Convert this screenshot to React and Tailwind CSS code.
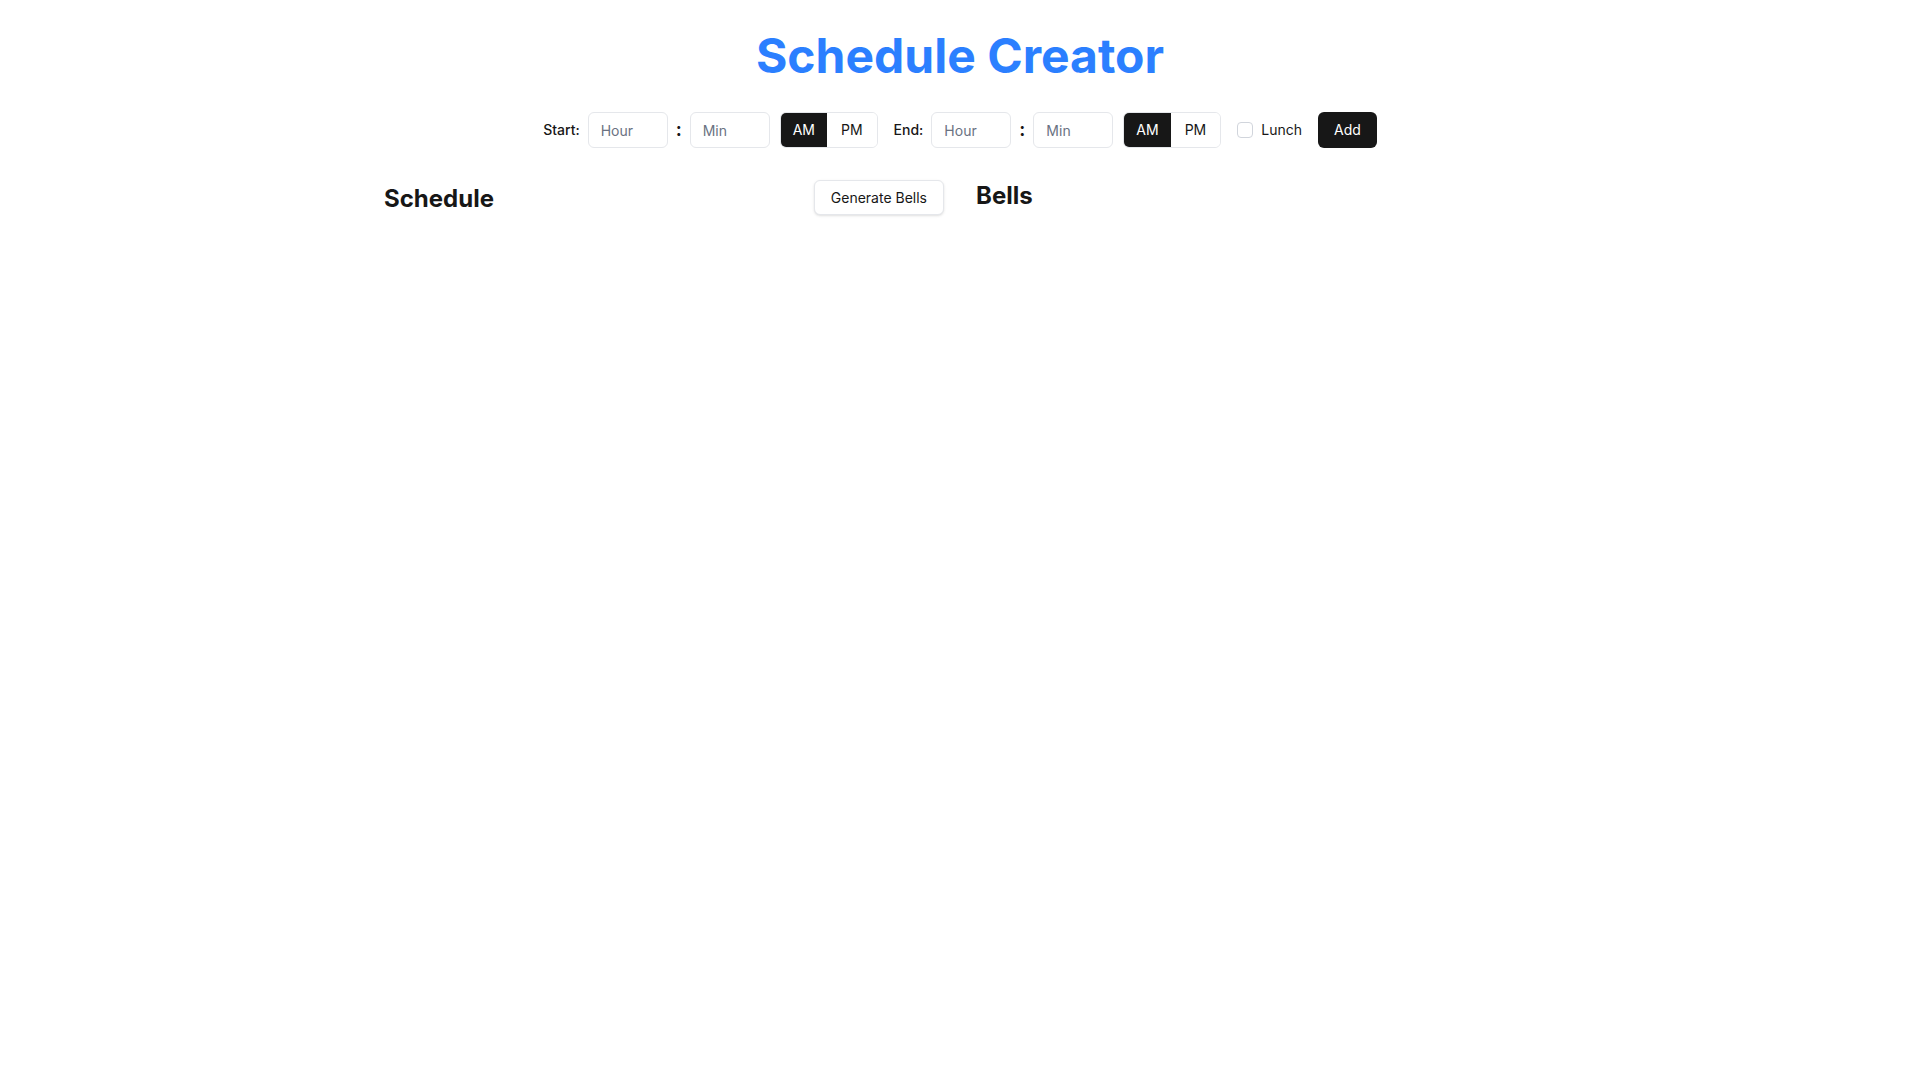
import React, { useState } from 'react';

const TimeInput = ({ label, period, onPeriod }) => (
  <div className="flex items-center gap-2">
    <span className="text-sm font-medium text-neutral-900">{label}</span>
    <input
      placeholder="Hour"
      className="h-9 w-20 rounded-md border border-gray-200 px-3 text-sm text-neutral-900 placeholder:text-gray-500 outline-none"
    />
    <span className="text-lg font-bold text-neutral-900">:</span>
    <input
      placeholder="Min"
      className="h-9 w-20 rounded-md border border-gray-200 px-3 text-sm text-neutral-900 placeholder:text-gray-500 outline-none"
    />
    <div className="ml-0.5 flex h-9 overflow-hidden rounded-md border border-gray-200">
      <button
        onClick={() => onPeriod('AM')}
        className={period === 'AM' ? 'bg-neutral-900 px-3 text-sm text-white' : 'bg-white px-3 text-sm text-neutral-900'}
      >
        AM
      </button>
      <button
        onClick={() => onPeriod('PM')}
        className={period === 'PM' ? 'bg-neutral-900 px-3.5 text-sm text-white' : 'bg-white px-3.5 text-sm text-neutral-900'}
      >
        PM
      </button>
    </div>
  </div>
);

export default function App() {
  const [startPeriod, setStartPeriod] = useState('AM');
  const [endPeriod, setEndPeriod] = useState('AM');
  const [lunch, setLunch] = useState(false);

  return (
    <div className="min-h-screen bg-white font-['Inter','Liberation_Sans',sans-serif] text-neutral-900">
      <div className="mx-auto max-w-6xl pt-8">
        <h1 className="text-center text-5xl leading-none font-bold text-blue-500">Schedule Creator</h1>

        {/* Time entry row */}
        <div className="mt-8 flex items-center justify-center gap-4">
          <TimeInput label="Start:" period={startPeriod} onPeriod={setStartPeriod} />
          <TimeInput label="End:" period={endPeriod} onPeriod={setEndPeriod} />
          <label className="flex items-center gap-2 text-sm">
            <input
              type="checkbox"
              checked={lunch}
              onChange={(e) => setLunch(e.target.checked)}
              className="h-4 w-4 appearance-none rounded-sm border border-gray-300 bg-white checked:bg-neutral-900"
            />
            Lunch
          </label>
          <button className="h-9 rounded-md bg-neutral-900 px-4 text-sm text-white">Add</button>
        </div>

        {/* Columns */}
        <div className="mt-8 grid grid-cols-2 gap-8">
          <div className="flex items-center justify-between">
            <h2 className="mt-0.5 text-2xl font-bold">Schedule</h2>
            <button className="h-[35px] rounded-md border border-gray-200 bg-white px-4 text-sm shadow-sm">
              Generate Bells
            </button>
          </div>
          <div>
            <h2 className="text-2xl font-bold">Bells</h2>
          </div>
        </div>
      </div>
    </div>
  );
}
